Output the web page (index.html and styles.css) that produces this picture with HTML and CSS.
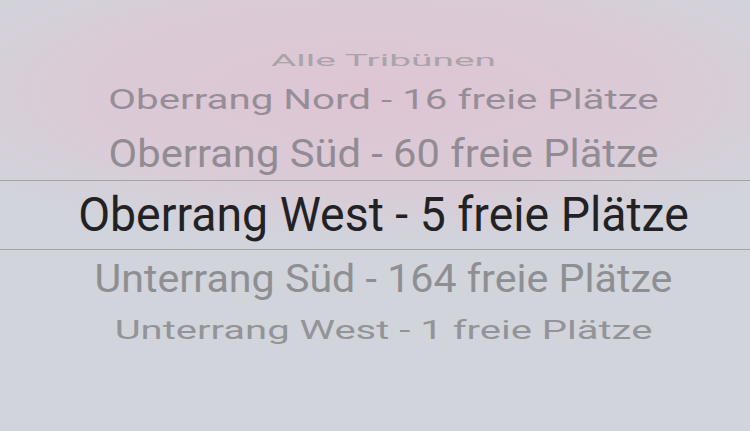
FILE: index.html
```html
<!DOCTYPE html>
<html lang="de">
<head>
  <meta charset="UTF-8">
  <meta name="viewport" content="width=device-width, initial-scale=1">
  <title>Tribüne wählen</title>
  <link rel="stylesheet" href="styles.css">
</head>
<body>
  <div class="picker">
    <div class="row row-far-top"><span>Alle Tribünen</span></div>
    <div class="row row-top2"><span>Oberrang Nord - 16 freie Plätze</span></div>
    <div class="row row-top1"><span>Oberrang Süd - 60 freie Plätze</span></div>
    <div class="row row-selected"><span>Oberrang West - 5 freie Plätze</span></div>
    <div class="row row-bottom1"><span>Unterrang Süd - 164 freie Plätze</span></div>
    <div class="row row-bottom2"><span>Unterrang West - 1 freie Plätze</span></div>
  </div>
</body>
</html>
```

FILE: styles.css
```css
* { box-sizing: border-box; }
html, body {
  margin: 0;
  height: 100%;
}
body {
  font-family: Roboto, 'Liberation Sans', sans-serif;
  background: #d1d4db;
  overflow: hidden;
}
.picker {
  height: 431px;
  display: flex;
  flex-direction: column;
  align-items: stretch;
  background:
    radial-gradient(ellipse 500px 155px at 375px 92px, rgba(223, 196, 212, 0.95) 0%, rgba(221, 199, 213, 0.78) 55%, rgba(209, 212, 219, 0) 100%),
    #d1d4db;
}
.row {
  display: flex;
  align-items: center;
  justify-content: center;
  padding-left: 17px;
  white-space: nowrap;
  color: #8d8a90;
}
.row span {
  display: inline-block;
}
.row-far-top {
  margin-top: 45px;
  height: 30px;
  font-size: 38.9px;
  color: #aaa3aa;
}
.row-far-top span { transform: scaleY(0.43); }
.row-top2 {
  margin-top: 6px;
  height: 36px;
  font-size: 40.3px;
  color: #968e96;
}
.row-top2 span { transform: scaleY(0.68); }
.row-top1 {
  margin-top: 14px;
  height: 44px;
  font-size: 41.7px;
  color: #918c93;
}
.row-top1 span { transform: scaleY(0.94); }
.row-selected {
  margin-top: 5px;
  height: 70px;
  border-top: 1px solid #a3a4a9;
  border-bottom: 1px solid #a3a4a9;
  font-size: 46.4px;
  color: #222225;
}
.row-selected span { transform: scaleY(1.02); }
.row-bottom1 {
  margin-top: 7px;
  height: 44px;
  font-size: 41.2px;
  color: #8e8f93;
}
.row-bottom1 span { transform: scaleY(0.92); }
.row-bottom2 {
  margin-top: 11px;
  height: 36px;
  font-size: 40px;
  color: #939498;
}
.row-bottom2 span { transform: scaleY(0.65); }
```
